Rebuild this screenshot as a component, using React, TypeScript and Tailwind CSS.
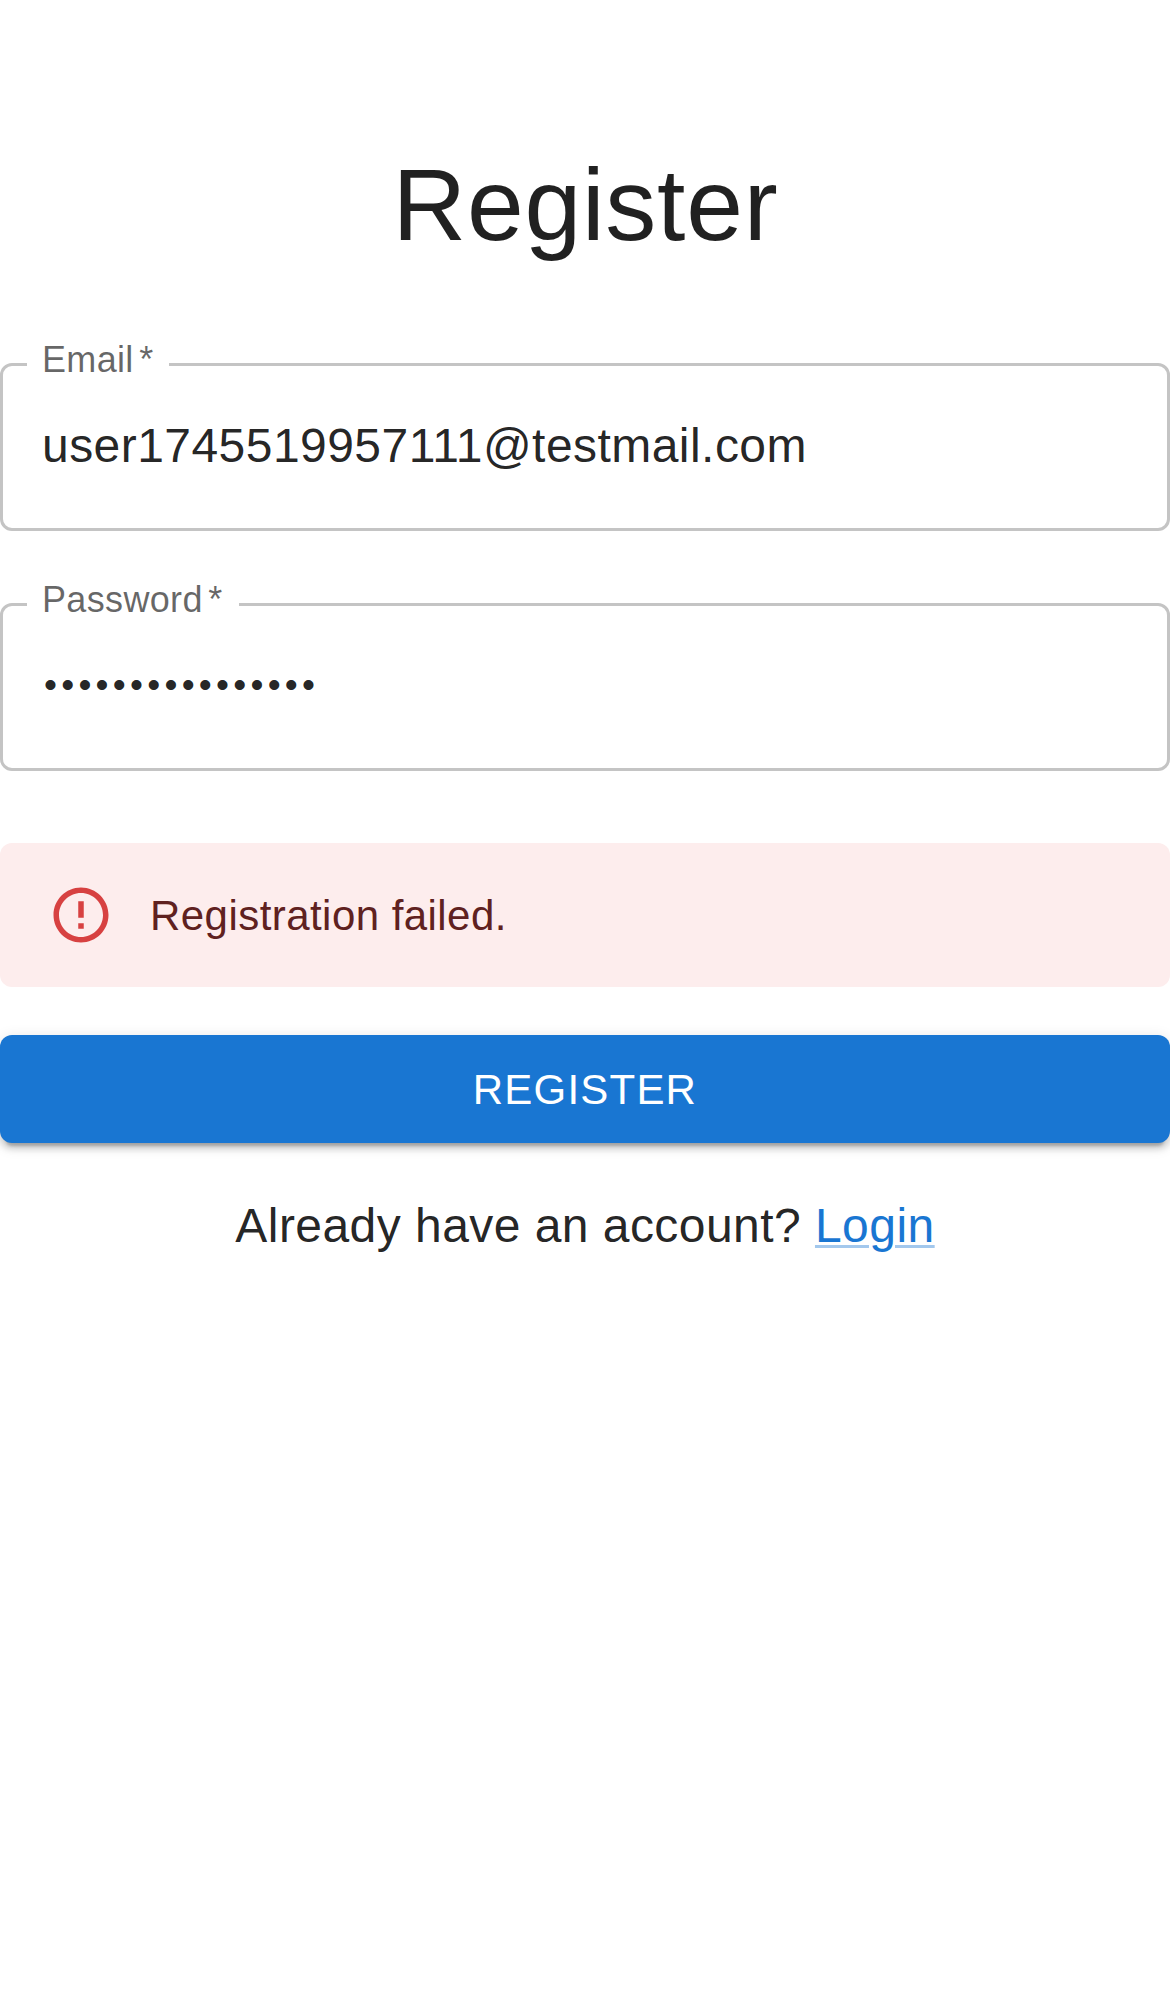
import React from "react";

type FieldProps = {
  id: string;
  label: string;
  value: string;
  labelWidth: string;
  inputClass: string;
};

function TextField({ id, label, value, labelWidth, inputClass }: FieldProps) {
  return (
    <div className="relative h-[168px] rounded-[12px] border-[3px] border-[#c4c4c4]">
      <label
        htmlFor={id}
        className={`absolute -top-[30px] left-[24px] h-[48px] whitespace-nowrap bg-white pl-[15px] text-[36px] leading-[48px] tracking-[0.00938em] text-black/60 ${labelWidth}`}
      >
        {label}
        <span className="-ml-[2px]">&thinsp;*</span>
      </label>
      <input
        id={id}
        type="text"
        readOnly
        value={value}
        className={`block h-[162px] w-full bg-transparent text-black/87 outline-none ${inputClass}`}
      />
    </div>
  );
}

export default function App() {
  return (
    <main className="flex min-h-[1992px] w-full flex-col bg-white pt-[142px] font-['Liberation_Sans',Arial,sans-serif] text-black/87 [font-kerning:normal]">
      <h1 className="h-[126px] pl-px text-center text-[102px] leading-[126px] tracking-[0.00735em]">
        Register
      </h1>
      <form className="mt-[95px] flex flex-col" onSubmit={(e) => e.preventDefault()}>
        <div className="flex flex-col gap-[72px]">
          <TextField
            id="email"
            label="Email"
            value="user1745519957111@testmail.com"
            labelWidth="w-[142px]"
            inputClass="px-[39px] pb-[3px] text-[48px] tracking-[0.00938em]"
          />
          <TextField
            id="password"
            label="Password"
            value="••••••••••••••••"
            labelWidth="w-[212px]"
            inputClass="px-[41px] pb-[5px] text-[37px] tracking-[4.25px]"
          />
        </div>
        <div
          role="alert"
          className="mt-[72px] flex h-[144px] items-center rounded-[12px] bg-[#fdeded] px-[48px] text-[#5f2120]"
        >
          <svg viewBox="0 0 24 24" className="mr-[36px] size-[66px] shrink-0 fill-[#d32f2f] opacity-90">
            <path d="M11 15h2v2h-2zm0-8h2v6h-2zm.99-5C6.47 2 2 6.48 2 12s4.47 10 9.99 10C17.52 22 22 17.52 22 12S17.52 2 11.99 2zM12 20c-4.42 0-8-3.58-8-8s3.58-8 8-8 8 3.58 8 8-3.58 8-8 8z" />
          </svg>
          <span className="pt-[2px] text-[42px] leading-[60px] tracking-[0.01071em]">Registration failed.</span>
        </div>
        <button
          type="submit"
          className="mt-[48px] h-[108px] rounded-[12px] bg-[#1976d2] text-center text-[42px] leading-[73px] tracking-[0.02857em] text-white uppercase shadow-[0_9px_3px_-6px_rgba(0,0,0,0.2),0_6px_6px_0_rgba(0,0,0,0.14),0_3px_15px_0_rgba(0,0,0,0.12)]"
        >
          Register
        </button>
      </form>
      <p className="mt-[47px] text-center text-[48px] leading-[72px] tracking-[0.00938em]">
        Already have an account?{" "}
        <a
          href="#login"
          className="text-[#1976d2] underline decoration-[#1976d2]/40 decoration-[3px] underline-offset-[3px]"
        >
          Login
        </a>
      </p>
    </main>
  );
}
